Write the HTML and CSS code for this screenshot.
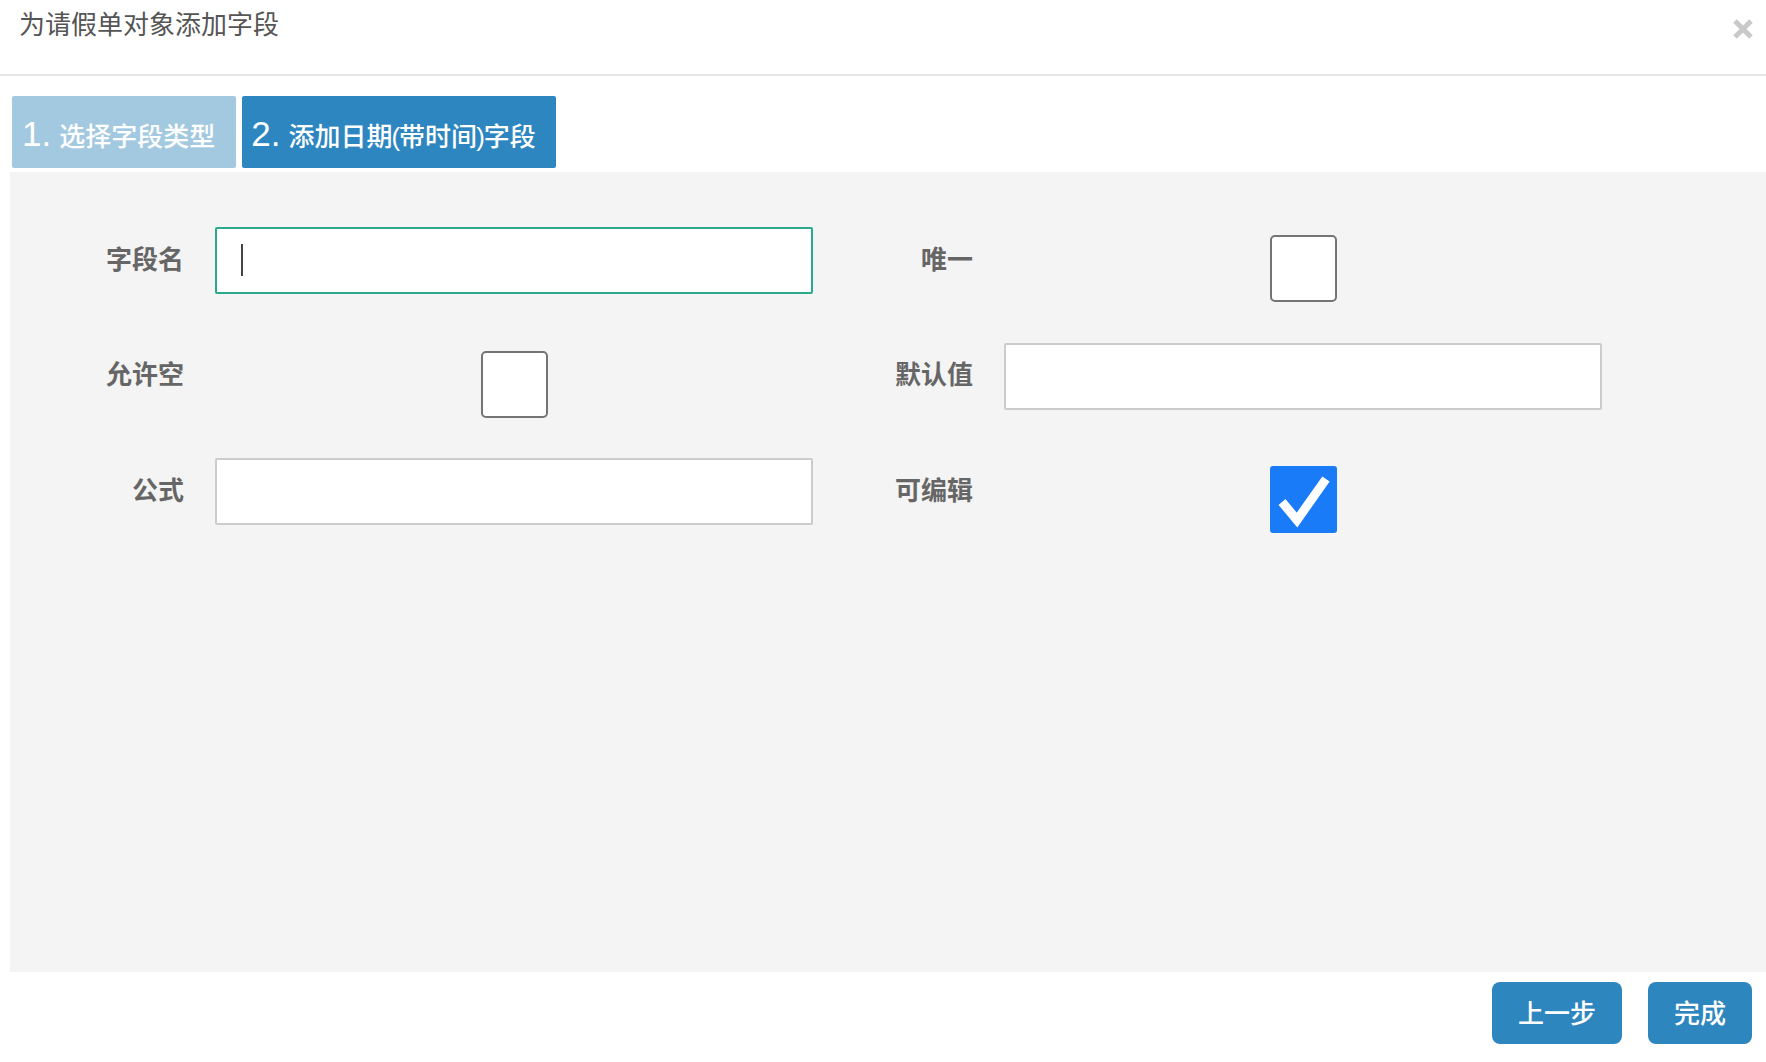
FILE: index.html
```html
<!DOCTYPE html>
<html lang="zh-CN">

<head>
    <meta charset="UTF-8">
    <meta name="viewport" content="width=device-width, initial-scale=1.0">
    <title>添加字段</title>
    <link rel="stylesheet" href="styles.css">
</head>

<body>

    <div class="modal">

        <div class="modal-header">
            <h4 class="modal-title">为请假单对象添加字段</h4>
            <button class="close" type="button">
                <svg width="22" height="22" viewBox="0 0 22 22">
                    <path d="M3 3 L19 19 M19 3 L3 19" stroke="#c9c9c9" stroke-width="5" />
                </svg>
            </button>
        </div>

        <div class="modal-body">
            <ul class="steps">
                <li class="step step-done"><span class="step-num">1.</span><span class="step-text">选择字段类型</span></li>
                <li class="step step-current"><span class="step-num">2.</span><span class="step-text">添加日期<span class="paren">(</span>带时间<span class="paren">)</span>字段</span></li>
            </ul>

            <div class="step-content">
                <form class="field-form">
                    <div class="field">
                        <label class="field-label">字段名</label>
                        <div class="input-wrap is-focused">
                            <input class="field-input" type="text">
                        </div>
                    </div>
                    <div class="field">
                        <label class="field-label">唯一</label>
                        <div class="check-wrap">
                            <span class="check"></span>
                        </div>
                    </div>
                    <div class="field">
                        <label class="field-label">允许空</label>
                        <div class="check-wrap">
                            <span class="check"></span>
                        </div>
                    </div>
                    <div class="field">
                        <label class="field-label">默认值</label>
                        <div class="input-wrap">
                            <input class="field-input" type="text">
                        </div>
                    </div>
                    <div class="field">
                        <label class="field-label">公式</label>
                        <div class="input-wrap">
                            <input class="field-input" type="text">
                        </div>
                    </div>
                    <div class="field">
                        <label class="field-label">可编辑</label>
                        <div class="check-wrap">
                            <span class="check checked">
                                <svg width="67" height="67" viewBox="0 0 67 67">
                                    <polyline points="12,36 27,54 56,13" fill="none" stroke="#fff" stroke-width="9" />
                                </svg>
                            </span>
                        </div>
                    </div>
                </form>
            </div>
        </div>

        <div class="modal-footer">
            <button class="btn" type="button">上一步</button>
            <button class="btn" type="button">完成</button>
        </div>

    </div>

</body>

</html>
```

FILE: styles.css
```css
body {
    font-family: "Liberation Sans", "Noto Sans CJK SC", sans-serif;
    margin: 0;
    padding: 0;
    background-color: white;
}

.modal {
    width: 1766px;
    height: 1062px;
    display: flex;
    flex-direction: column;
}

/* Cabecera */
.modal-header {
    height: 74px;
    border-bottom: 2px solid #e5e5e5;
    display: flex;
    justify-content: space-between;
    align-items: flex-start;
}

.modal-title {
    margin: 0;
    padding: 7px 0 0 19px;
    font-size: 26px;
    line-height: 36px;
    font-weight: normal;
    color: #555;
}

.close {
    background: transparent;
    border: none;
    padding: 0;
    margin: 18px 12px 0 0;
    cursor: pointer;
}

/* Pasos */
.modal-body {
    padding-left: 10px;
}

.steps {
    list-style: none;
    margin: 20px 0 4px 2px;
    padding: 0;
    display: flex;
    gap: 6px;
}

.step {
    height: 72px;
    box-sizing: border-box;
    padding: 10px 20px 0 10px;
    line-height: 62px;
    font-size: 26px;
    font-weight: 500;
    color: white;
    border-radius: 2px;
}

.step-done {
    padding-right: 21px;
    background-color: #a3c9e1;
}

.step-current {
    padding-left: 9px;
    background-color: #2d86bf;
}

.step-num {
    font-size: 35px;
    line-height: 1;
    margin-right: 8px;
}

.paren {
    margin: 0 -1px;
}

.step-content {
    height: 800px;
    background-color: #f4f4f4;
    box-sizing: border-box;
    padding: 55px 0 0 54px;
}

/* Formulario */
.field-form {
    display: grid;
    grid-template-columns: 789px 789px;
    row-gap: 48.5px;
}

.field {
    display: flex;
    align-items: center;
    height: 67px;
}

.field-label {
    width: 120px;
    margin-right: 31px;
    margin-bottom: 7px;
    text-align: right;
    font-size: 26px;
    font-weight: bold;
    color: #666;
}

.input-wrap {
    position: relative;
    width: 598px;
}

.field-input {
    display: block;
    width: 100%;
    height: 67px;
    box-sizing: border-box;
    border: 2px solid #ccc;
    border-radius: 2px;
    background-color: white;
    padding: 0 24px;
    font-size: 26px;
    outline: none;
}

.is-focused .field-input {
    border-color: #2aaa8b;
}

.is-focused::after {
    content: "";
    position: absolute;
    left: 26px;
    top: 17px;
    width: 2px;
    height: 32px;
    background-color: #444;
}

.check-wrap {
    width: 598px;
    display: flex;
    justify-content: center;
}

.check {
    width: 67px;
    height: 67px;
    margin-top: 16px;
    box-sizing: border-box;
    border: 2px solid #747474;
    border-radius: 5px;
    background-color: white;
}

.check.checked {
    border: none;
    border-radius: 3px;
    background-color: #1a7bf8;
}

.check svg {
    display: block;
}

/* Pie */
.modal-footer {
    display: flex;
    justify-content: flex-end;
    gap: 26px;
    padding: 10px 14px 0 0;
}

.btn {
    height: 62px;
    padding: 0 26px 3px;
    border: none;
    border-radius: 8px;
    background-color: #2e86bf;
    color: white;
    font-family: "Liberation Sans", "Noto Sans CJK SC", sans-serif;
    font-size: 26px;
    font-weight: 500;
    cursor: pointer;
}
```
